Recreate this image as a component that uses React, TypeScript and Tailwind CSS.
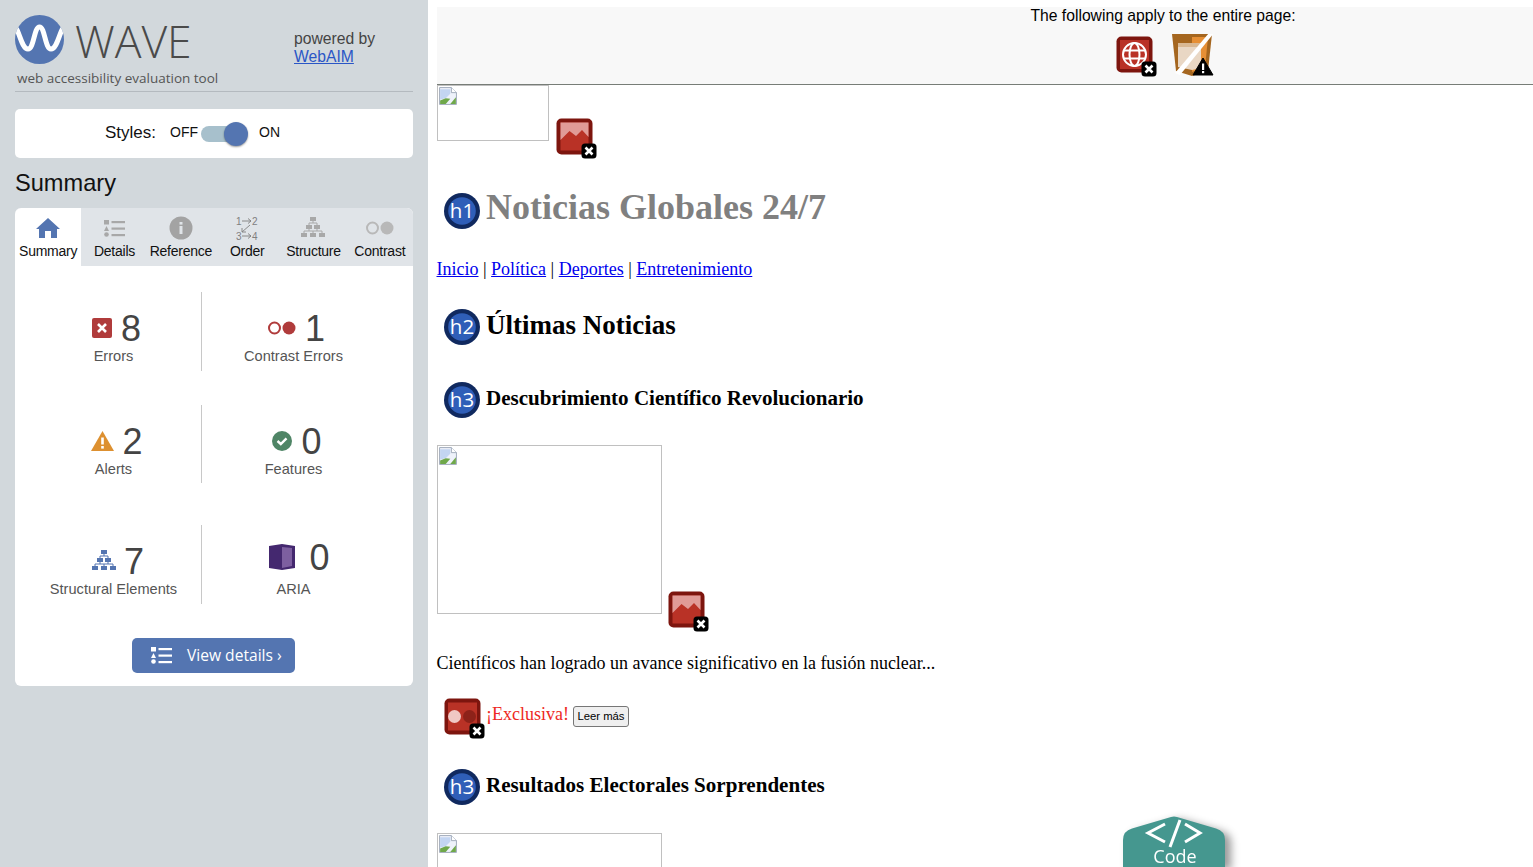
import React from "react";

const Badge = ({ warn = false }: { warn?: boolean }) =>
  warn ? (
    <g>
      <path d="M31 24 L41 41 H21 Z" fill="#000" stroke="#000" strokeLinejoin="round" />
      <rect x="30" y="29.5" width="2.2" height="6.5" fill="#fff" />
      <rect x="30" y="37" width="2.2" height="2.2" fill="#fff" />
    </g>
  ) : (
    <g>
      <rect x="25.5" y="25.5" width="15" height="15" rx="3.5" fill="#000" />
      <path d="M29.5 29.5 L36.5 36.5 M36.5 29.5 L29.5 36.5" stroke="#fff" strokeWidth="2.6" />
    </g>
  );

const ImageErr = () => (
  <svg width="41" height="41" viewBox="0 0 41 41" className="shrink-0">
    <rect x="0.5" y="0.5" width="36" height="36" rx="5" fill="#7d150e" />
    <rect x="4.5" y="4.5" width="28" height="28" fill="#b93226" />
    <path d="M4.5 4.5 H32.5 V19 L26 12 L20 18 L13.5 13 L4.5 22 Z" fill="#e09b97" />
    <Badge />
  </svg>
);

const ContrastErr = () => (
  <svg width="41" height="41" viewBox="0 0 41 41" className="shrink-0">
    <rect x="0.5" y="0.5" width="36" height="36" rx="5" fill="#7d150e" />
    <rect x="4" y="4.5" width="29" height="28" fill="#b93226" />
    <circle cx="10.5" cy="18.5" r="6.5" fill="#f0c8c4" />
    <circle cx="25.5" cy="18.5" r="6.5" fill="#8d2219" />
    <Badge />
  </svg>
);

const Heading = ({ n }: { n: number }) => (
  <svg width="37" height="37" viewBox="0 0 37 37" className="shrink-0">
    <circle cx="18" cy="18" r="18" fill="#10295f" />
    <circle cx="18" cy="18" r="13.8" fill="#2f5eb8" />
    <text x="18" y="25.2" textAnchor="middle" fontSize="20.5" fill="#fff" fontFamily="Open Sans, sans-serif">
      {"h" + n}
    </text>
  </svg>
);

const Broken = () => (
  <svg width="18" height="18" viewBox="2 2 16 16" className="absolute left-px top-px">
    <path d="M2.5 2.5 H13 L17.5 7 V17.5 H2.5 Z" fill="#eef2fa" stroke="#9aa5b5" strokeWidth="0.8" />
    <path d="M13 2.5 V7 H17.5" fill="#fff" stroke="#9aa5b5" strokeWidth="0.8" />
    <path d="M3 4 H12 V8 L8 12 L3 13 Z" fill="#c3d5f2" />
    <path d="M3 17 V14 L8 12 L12 12.5 L8 17 Z" fill="#6fa84a" />
    <path d="M17 11 V17 H12 Z" fill="#6fa84a" />
  </svg>
);

const Tab = ({ label, active, children }: { label: string; active?: boolean; children: React.ReactNode }) => (
  <div className={"flex flex-col items-center pt-[7px] h-[58px] " + (active ? "bg-white rounded-tl-[6px]" : "")}>
    <div className="h-[26px] flex items-center justify-center">{children}</div>
    <div className="text-[14px] leading-[20px] tracking-[-0.25px] text-[#111] whitespace-nowrap">{label}</div>
  </div>
);

const TreeIcon = ({ color }: { color: string }) => (
  <svg width="24" height="23" viewBox="0 0 24 23">
    <g fill={color}>
      <rect x="9" y="0" width="6" height="4" />
      <rect x="5" y="8" width="6" height="4" />
      <rect x="13" y="8" width="6" height="4" />
      <rect x="0" y="16" width="6" height="4" />
      <rect x="9" y="16" width="6" height="4" />
      <rect x="18" y="16" width="6" height="4" />
    </g>
    <path d="M12 4 V6 M8 8 V6 H16 V8 M8 12 V14 M16 12 V14 M3 16 V14 H21 V16 M12 14 V16" stroke={color} fill="none" />
  </svg>
);

const ListIcon = ({ color }: { color: string }) => (
  <svg width="21" height="17" viewBox="0 0 21 17">
    <rect x="0" y="0" width="5" height="4.5" fill={color} />
    <path d="M2.5 6 L5 11 H0 Z" fill={color} />
    <circle cx="2.5" cy="14.5" r="2.3" fill={color} />
    <rect x="7.5" y="1" width="13.5" height="2.2" fill={color} />
    <rect x="7.5" y="7.5" width="13.5" height="2.2" fill={color} />
    <rect x="7.5" y="14" width="13.5" height="2.2" fill={color} />
  </svg>
);

const Stat = ({ icon, num, label, cls }: { icon: React.ReactNode; num: number; label: string; cls: string }) => (
  <div className="flex flex-col items-center">
    <div className={"flex items-center h-[36px] " + cls}>
      {icon}
      <span className="text-[36px] leading-[36px] mt-[1px] text-[#444]">{num}</span>
    </div>
    <div className="text-[14.6px] leading-[20px] text-[#555]">{label}</div>
  </div>
);

const StatRow = ({ h, left, right, rightPt = "pt-[18px]" }: { h: string; left: React.ReactNode; right: React.ReactNode; rightPt?: string }) => (
  <div className={"flex " + h}>
    <div className="w-[176px] border-r border-[#c8c8c8] pt-[18px]">{left}</div>
    <div className={"w-[183px] " + rightPt}>{right}</div>
  </div>
);

export default function App() {
  return (
    <div className="flex h-[867px] w-[1533px] overflow-hidden bg-white font-['Liberation_Sans',Arial,sans-serif]">
      {/* Sidebar */}
      <aside className="w-[428px] shrink-0 bg-[#d2d8dc] px-[15px] pt-[15px]">
        <div className="flex h-[77px] border-b border-[#b4babf]">
          <div className="w-[279px] relative">
            <div className="flex items-start">
              <svg width="49" height="49" viewBox="0 0 49 49">
                <defs>
                  <clipPath id="logoClip">
                    <circle cx="24.5" cy="24.5" r="24.5" />
                  </clipPath>
                </defs>
                <circle cx="24.5" cy="24.5" r="24.5" fill="#5475b1" />
                <path
                  d="M-1 12 C4 12 6 34 13 34 C19 34 19 12 24.5 12 C30 12 30 34 36 34 C43 34 45 12 50 12"
                  fill="none"
                  stroke="#fff"
                  strokeWidth="5"
                  clipPath="url(#logoClip)"
                />
              </svg>
              <span className="ml-[11px] mt-[-2px] text-[44.5px] leading-[56px] font-light text-[#4a4a4a] font-['Open_Sans',sans-serif]">WAVE</span>
            </div>
            <div className="ml-[2px] text-[13.5px] leading-[18px] text-[#555] font-['Open_Sans',sans-serif] whitespace-nowrap">web accessibility evaluation tool</div>
          </div>
          <div className="pt-[15px] text-[15.7px] leading-[18px] text-[#444]">
            <div>powered by</div>
            <a className="text-[#2a56c6] underline">WebAIM</a>
          </div>
        </div>

        <div className="mt-[17px] h-[49px] bg-white rounded-[5px] flex items-center pl-[90px] pb-[2px] text-[#111]">
          <span className="text-[17px] w-[65px]">Styles:</span>
          <span className="text-[14px] w-[31px]">OFF</span>
          <span className="relative w-[46px] h-[16px] mt-[2px] rounded-full bg-[#a7c0cc]">
            <span className="absolute right-[-1px] top-[-4px] w-[24px] h-[24px] rounded-full bg-[#5475b1] shadow-[0_1px_2px_rgba(0,0,0,0.4)]" />
          </span>
          <span className="text-[14px] ml-[12px]">ON</span>
        </div>

        <h2 className="mt-[11px] text-[23.6px] leading-[28px] text-[#111]">Summary</h2>

        <div className="mt-[11px] h-[478px] bg-white rounded-[6px] overflow-hidden">
          <div className="grid grid-cols-6 h-[58px] bg-[#e0e4e8]">
            <Tab label="Summary" active>
              <svg width="24" height="20" viewBox="0 0 24 20">
                <path d="M12 0 L24 11 H21 V20 H15 V13 H9 V20 H3 V11 H0 Z" fill="#5475b1" />
              </svg>
            </Tab>
            <Tab label="Details">
              <ListIcon color="#a8a8a8" />
            </Tab>
            <Tab label="Reference">
              <svg width="24" height="24" viewBox="0 0 24 24">
                <circle cx="12" cy="12" r="11.5" fill="#a3a3a3" />
                <rect x="10.5" y="10" width="3" height="8" fill="#e0e4e8" />
                <rect x="10.5" y="6" width="3" height="2.6" fill="#e0e4e8" />
              </svg>
            </Tab>
            <Tab label="Order">
              <svg width="22" height="24" viewBox="0 0 22 24">
                <text x="0" y="8.5" fontSize="10" fill="#808080" fontFamily="Liberation Sans, sans-serif">1</text>
                <text x="16" y="8.5" fontSize="10" fill="#808080" fontFamily="Liberation Sans, sans-serif">2</text>
                <text x="0" y="23.5" fontSize="10" fill="#808080" fontFamily="Liberation Sans, sans-serif">3</text>
                <text x="16" y="23.5" fontSize="10" fill="#808080" fontFamily="Liberation Sans, sans-serif">4</text>
                <path d="M6 5 H15 M12 2.5 L15 5 L12 7.5 M6 20 H15 M12 17.5 L15 20 L12 22.5 M14 9 L6 16 M6 12 V16 H10" fill="none" stroke="#808080" strokeWidth="0.9" />
              </svg>
            </Tab>
            <Tab label="Structure">
              <TreeIcon color="#a8a8a8" />
            </Tab>
            <Tab label="Contrast">
              <svg width="28" height="14" viewBox="0 0 28 14">
                <circle cx="6.5" cy="7" r="5.5" fill="none" stroke="#b8b8b8" strokeWidth="2" />
                <circle cx="21" cy="7" r="6.5" fill="#b8b8b8" />
              </svg>
            </Tab>
          </div>

          <div className="pl-[11px] pt-[26px]">
            <StatRow
              h="h-[79px]"
              left={
                <Stat
                  num={8}
                  label="Errors"
                  cls="gap-[9px] pl-[6px]"
                  icon={
                    <svg width="20" height="20" viewBox="0 0 20 20">
                      <rect width="20" height="20" rx="2" fill="#b03b3b" />
                      <path d="M6 6 L14 14 M14 6 L6 14" stroke="#fff" strokeWidth="2.6" />
                    </svg>
                  }
                />
              }
              right={
                <Stat
                  num={1}
                  label="Contrast Errors"
                  cls="gap-[9px] pl-[6px]"
                  icon={
                    <svg width="28" height="14" viewBox="0 0 28 14">
                      <circle cx="6.5" cy="7" r="5.5" fill="none" stroke="#b03b3b" strokeWidth="2" />
                      <circle cx="21" cy="7" r="6.5" fill="#b03b3b" />
                    </svg>
                  }
                />
              }
            />
            <div className="mt-[34px]">
              <StatRow
                h="h-[78px]"
                left={
                  <Stat
                    num={2}
                    label="Alerts"
                    cls="gap-[8px] pl-[7px]"
                    icon={
                      <svg width="23" height="20" viewBox="0 0 23 20">
                        <path d="M11.5 0 L23 20 H0 Z" fill="#dd9030" />
                        <rect x="10.2" y="6.5" width="2.6" height="7" fill="#fff" />
                        <rect x="10.2" y="15" width="2.6" height="2.6" fill="#fff" />
                      </svg>
                    }
                  />
                }
                right={
                  <Stat
                    num={0}
                    label="Features"
                    cls="gap-[9px] pl-[7px]"
                    icon={
                      <svg width="20" height="20" viewBox="0 0 20 20">
                        <circle cx="10" cy="10" r="10" fill="#4f8566" />
                        <path d="M5.5 10 L8.8 13 L14.5 7.3" fill="none" stroke="#fff" strokeWidth="2.4" />
                      </svg>
                    }
                  />
                }
              />
            </div>
            <div className="mt-[42px]">
              <StatRow
                h="h-[79px]"
                rightPt="pt-[14px]"
                left={<Stat num={7} label="Structural Elements" cls="gap-[8px] pl-[9px]" icon={<TreeIcon color="#5475b1" />} />}
                right={
                  <div className="flex flex-col items-center">
                    <div className="flex items-center h-[36px] gap-[14px] pl-[12px]">
                      <svg width="26" height="26" viewBox="0 0 26 26">
                        <path d="M0 2 L13 0 L26 2 V24 L13 26 L0 24 Z" fill="#44286f" />
                        <path d="M13 3 L23 4 V22 L13 24 Z" fill="#7d5fa0" />
                      </svg>
                      <span className="text-[36px] leading-[36px] mt-[1px] text-[#444]">0</span>
                    </div>
                    <div className="text-[14.6px] leading-[20px] mt-[4px] text-[#555]">ARIA</div>
                  </div>
                }
              />
            </div>
          </div>

          <div className="mt-[34px] flex pl-[117px]">
            <div className="w-[163px] h-[35px] bg-[#5475b1] rounded-[5px] flex items-center pl-[19px] text-white font-['Open_Sans',sans-serif] text-[15.6px]">
              <ListIcon color="#fff" />
              <span className="ml-[15px] whitespace-nowrap">View details ›</span>
            </div>
          </div>
        </div>
      </aside>

      {/* Main page */}
      <main className="relative flex-1 min-w-0 pl-[9px] pt-[7px] font-['Liberation_Serif',serif] text-[18px] text-black">
        <div className="h-[78px] bg-[#f8f8f8] border-b border-[#777d77] pl-[356px] font-['Liberation_Sans',sans-serif]">
          <div className="text-center text-[15.7px] leading-[18px]">The following apply to the entire page:</div>
          <div className="flex justify-center gap-[15px] mt-[9px] pl-[3px]">
            <svg width="41" height="41" viewBox="0 0 41 41" className="mt-[2px]">
              <rect x="0.5" y="0.5" width="36" height="36" rx="5" fill="#7d150e" />
              <rect x="4" y="4" width="29" height="29" fill="#b93226" />
              <g fill="none" stroke="#fff" strokeWidth="2">
                <circle cx="18.5" cy="18.5" r="11.5" />
                <ellipse cx="18.5" cy="18.5" rx="5" ry="11.5" />
                <path d="M8 14.5 H29 M8 22.5 H29" />
              </g>
              <Badge />
            </svg>
            <svg width="42" height="44" viewBox="0 0 42 44">
              <path d="M0 0 H40 L36 37 L20 42 L4 37 Z" fill="#a5661f" />
              <path d="M20 3 H36 L33 34 L20 38 Z" fill="#e68f35" />
              <path d="M6 9 H29 V34 L20 36 L6 33 Z" fill="#e9d7c4" />
              <path d="M6 9 H29 V13 H6 Z" fill="#d9b893" />
              <path d="M37 -1 L42 -1 L8 41 L3 39 Z" fill="#fff" />
              <Badge warn />
            </svg>
          </div>
        </div>

        <div className="flex items-end h-[74px]">
          <div className="relative w-[112px] h-[56px] border border-[#c0c0c0] self-start">
            <Broken />
          </div>
          <span className="ml-[7px]">
            <ImageErr />
          </span>
        </div>

        <div className="flex items-center gap-[5px] ml-[7px] mt-[34px] h-[37px]">
          <Heading n={1} />
          <h1 className="text-[36px] font-bold text-[#808080] leading-[37px] -mt-[8px]">Noticias Globales 24/7</h1>
        </div>

        <div className="-ml-[0.5px] mt-[29px] leading-[21px] whitespace-nowrap">
          <a className="text-[#0000ee] underline">Inicio</a> | <a className="text-[#0000ee] underline">Política</a> | <a className="text-[#0000ee] underline">Deportes</a> | <a className="text-[#0000ee] underline">Entretenimiento</a>
        </div>

        <div className="flex items-center gap-[5px] ml-[7px] mt-[29px] h-[37px]">
          <Heading n={2} />
          <h2 className="text-[27px] font-bold leading-[31px] -mt-[5px]">Últimas Noticias</h2>
        </div>

        <div className="flex items-center gap-[5px] ml-[7px] mt-[36px] h-[37px]">
          <Heading n={3} />
          <h3 className="text-[21.06px] font-bold leading-[24px] -mt-[5px]">Descubrimiento Científico Revolucionario</h3>
        </div>

        <div className="flex items-end mt-[26px]">
          <div className="relative w-[225px] h-[169px] border border-[#c0c0c0]">
            <Broken />
          </div>
          <span className="ml-[6px] -mb-[18px]">
            <ImageErr />
          </span>
        </div>

        <p className="-ml-[0.5px] mt-[39px] leading-[21px]">Científicos han logrado un avance significativo en la fusión nuclear...</p>

        <div className="flex items-start ml-[7px] mt-[24px] h-[41px]">
          <ContrastErr />
          <span className="text-[#ee2a24] ml-[1px] mt-[6px] leading-[21px]">¡Exclusiva!</span>
          <button className="ml-[4px] mt-[8px] h-[21px] w-[56px] border border-[#767676] rounded-[3px] bg-[#efefef] text-[11.3px] text-black font-['Liberation_Sans',sans-serif]">Leer más</button>
        </div>

        <div className="flex items-center gap-[5px] ml-[7px] mt-[30px] h-[37px]">
          <Heading n={3} />
          <h3 className="text-[21.06px] font-bold leading-[24px] -mt-[5px]">Resultados Electorales Sorprendentes</h3>
        </div>

        <div className="relative w-[225px] h-[169px] border border-[#c0c0c0] mt-[27px]">
          <Broken />
        </div>

        <div className="absolute left-[695px] top-[816px] w-[102px] h-[51px] drop-shadow-[6px_3px_4px_rgba(0,0,0,0.4)]">
          <svg width="102" height="51" viewBox="0 0 102 51" className="absolute inset-0">
            <path d="M0 24 Q0 15 9 12.5 L48 1 Q51 0 54 1 L93 12.5 Q102 15 102 24 V51 H0 Z" fill="#45978f" />
            <path d="M42 8 L25 17 L42 26 M62 8 L77 17 L62 26 M57 4 L47 31" fill="none" stroke="#fff" strokeWidth="3" />
          </svg>
          <span className="absolute inset-x-0 pl-[2px] top-[30px] text-center text-white text-[18px] leading-[20px] font-['Open_Sans',sans-serif]">Code</span>
        </div>
      </main>
    </div>
  );
}
